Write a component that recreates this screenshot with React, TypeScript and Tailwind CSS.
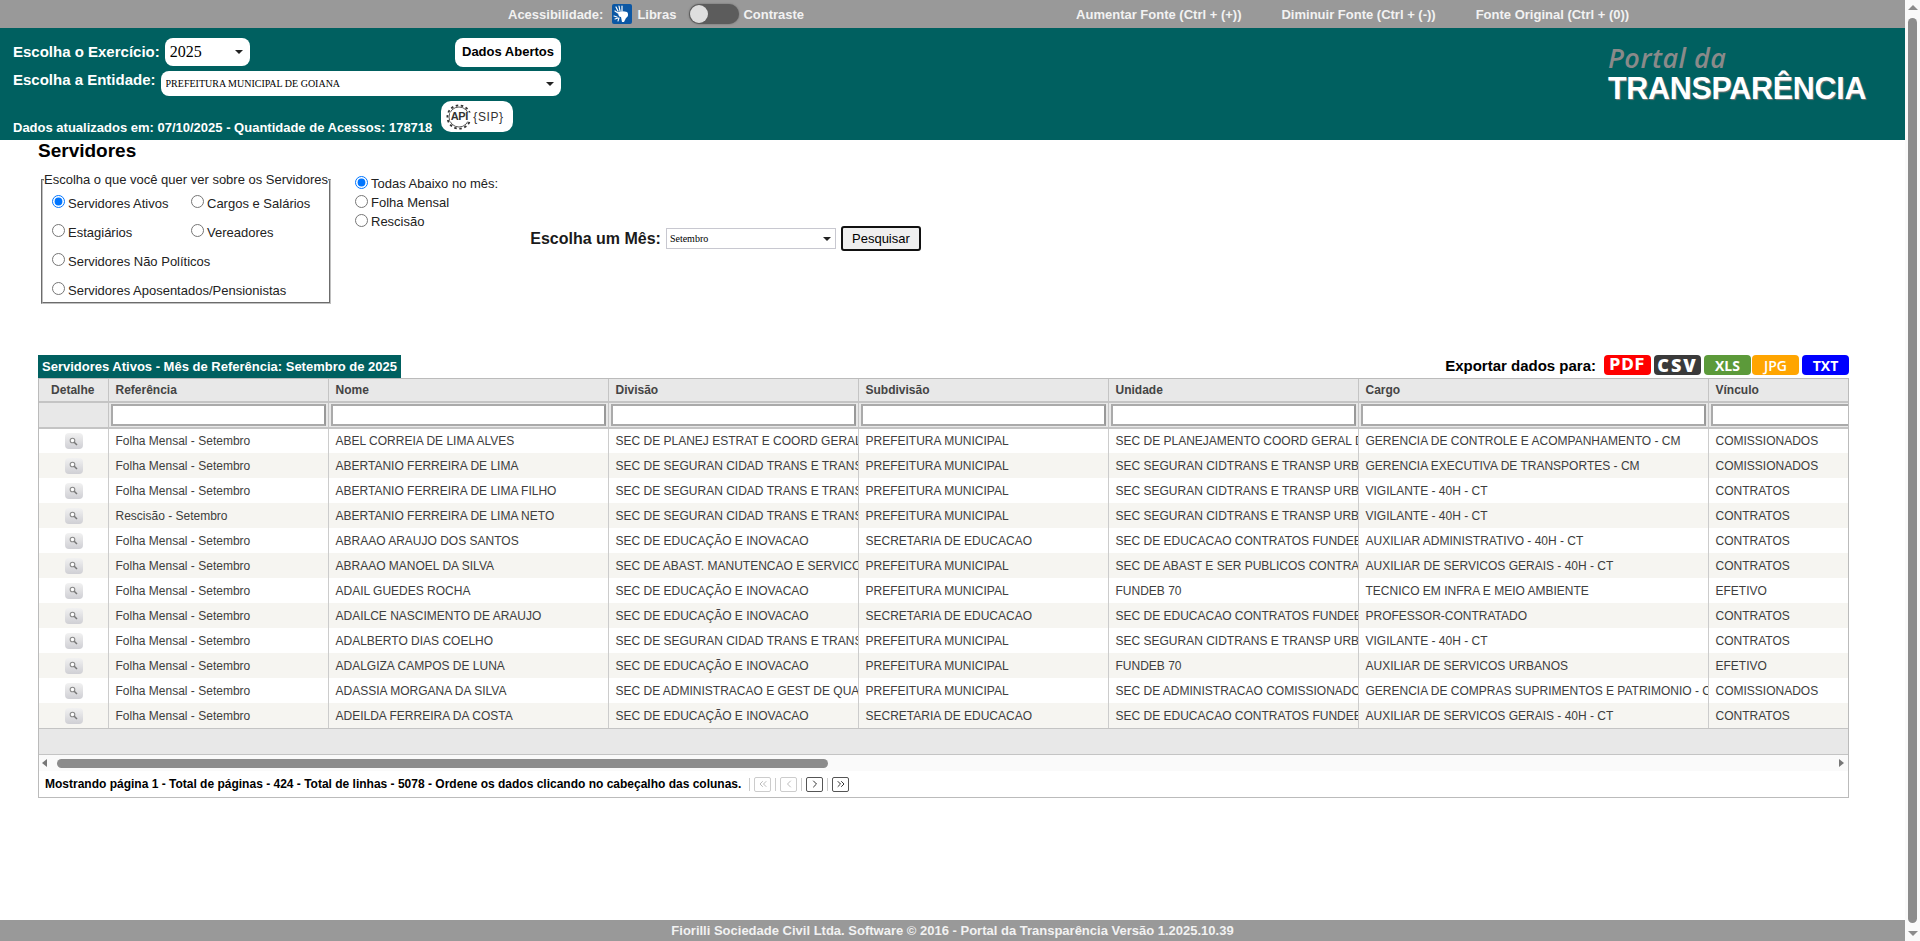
import { ChevronLeft, ChevronRight, ChevronsLeft, ChevronsRight } from "lucide-react";

const sans = "font-['Liberation_Sans',Arial,sans-serif]";

const rows = [
  ["Folha Mensal - Setembro", "ABEL CORREIA DE LIMA ALVES", "SEC DE PLANEJ ESTRAT E COORD GERAL DO", "PREFEITURA MUNICIPAL", "SEC DE PLANEJAMENTO COORD GERAL DO", "GERENCIA DE CONTROLE E ACOMPANHAMENTO - CM", "COMISSIONADOS"],
  ["Folha Mensal - Setembro", "ABERTANIO FERREIRA DE LIMA", "SEC DE SEGURAN CIDAD TRANS E TRANSP", "PREFEITURA MUNICIPAL", "SEC SEGURAN CIDTRANS E TRANSP URB", "GERENCIA EXECUTIVA DE TRANSPORTES - CM", "COMISSIONADOS"],
  ["Folha Mensal - Setembro", "ABERTANIO FERREIRA DE LIMA FILHO", "SEC DE SEGURAN CIDAD TRANS E TRANSP", "PREFEITURA MUNICIPAL", "SEC SEGURAN CIDTRANS E TRANSP URB", "VIGILANTE - 40H - CT", "CONTRATOS"],
  ["Rescisão - Setembro", "ABERTANIO FERREIRA DE LIMA NETO", "SEC DE SEGURAN CIDAD TRANS E TRANSP", "PREFEITURA MUNICIPAL", "SEC SEGURAN CIDTRANS E TRANSP URB", "VIGILANTE - 40H - CT", "CONTRATOS"],
  ["Folha Mensal - Setembro", "ABRAAO ARAUJO DOS SANTOS", "SEC DE EDUCAÇÃO E INOVACAO", "SECRETARIA DE EDUCACAO", "SEC DE EDUCACAO CONTRATOS FUNDEB", "AUXILIAR ADMINISTRATIVO - 40H - CT", "CONTRATOS"],
  ["Folha Mensal - Setembro", "ABRAAO MANOEL DA SILVA", "SEC DE ABAST. MANUTENCAO E SERVICOS", "PREFEITURA MUNICIPAL", "SEC DE ABAST E SER PUBLICOS CONTRA", "AUXILIAR DE SERVICOS GERAIS - 40H - CT", "CONTRATOS"],
  ["Folha Mensal - Setembro", "ADAIL GUEDES ROCHA", "SEC DE EDUCAÇÃO E INOVACAO", "PREFEITURA MUNICIPAL", "FUNDEB 70", "TECNICO EM INFRA E MEIO AMBIENTE", "EFETIVO"],
  ["Folha Mensal - Setembro", "ADAILCE NASCIMENTO DE ARAUJO", "SEC DE EDUCAÇÃO E INOVACAO", "SECRETARIA DE EDUCACAO", "SEC DE EDUCACAO CONTRATOS FUNDEB", "PROFESSOR-CONTRATADO", "CONTRATOS"],
  ["Folha Mensal - Setembro", "ADALBERTO DIAS COELHO", "SEC DE SEGURAN CIDAD TRANS E TRANSP", "PREFEITURA MUNICIPAL", "SEC SEGURAN CIDTRANS E TRANSP URB", "VIGILANTE - 40H - CT", "CONTRATOS"],
  ["Folha Mensal - Setembro", "ADALGIZA CAMPOS DE LUNA", "SEC DE EDUCAÇÃO E INOVACAO", "PREFEITURA MUNICIPAL", "FUNDEB 70", "AUXILIAR DE SERVICOS URBANOS", "EFETIVO"],
  ["Folha Mensal - Setembro", "ADASSIA MORGANA DA SILVA", "SEC DE ADMINISTRACAO E GEST DE QUAL", "PREFEITURA MUNICIPAL", "SEC DE ADMINISTRACAO COMISSIONADOS", "GERENCIA DE COMPRAS SUPRIMENTOS E PATRIMONIO - CM", "COMISSIONADOS"],
  ["Folha Mensal - Setembro", "ADEILDA FERREIRA DA COSTA", "SEC DE EDUCAÇÃO E INOVACAO", "SECRETARIA DE EDUCACAO", "SEC DE EDUCACAO CONTRATOS FUNDEB", "AUXILIAR DE SERVICOS GERAIS - 40H - CT", "CONTRATOS"],
];

const columns = ["Referência", "Nome", "Divisão", "Subdivisão", "Unidade", "Cargo", "Vínculo"];

const LibrasIcon = () => (
  <svg width="20" height="20" viewBox="0 0 20 20" className="rounded-[2px] bg-[#0b57a4]">
    <path d="M4 3l2 4M7 2l1 5M10 2v5M3 7l3 2" stroke="#fff" strokeWidth="1.2" strokeLinecap="round" />
    <path d="M6 8c3-1 6-1 9 0 2 2 1 5-1 6l-2 4h-2l-1-5c-2 0-3-2-3-5z" fill="#fff" />
    <path d="M2 12l3 1M3 15l3-1M6 17l1-3" stroke="#fff" strokeWidth="1.1" strokeLinecap="round" />
  </svg>
);

const ApiLogo = () => (
  <div className="mb-[2px] ml-[9px] flex h-[31px] w-[72px] items-center rounded-[10px] bg-white pl-[5px] text-[#333]">
    <div className="relative flex h-[26px] w-[26px] items-center justify-center">
      <svg width="26" height="26" viewBox="0 0 26 26" className="absolute inset-0">
        <circle cx="13" cy="13" r="10" fill="none" stroke="#333" strokeWidth="0.8" />
        <circle cx="13" cy="13" r="11.6" fill="none" stroke="#333" strokeWidth="1.8" strokeDasharray="2.5 2.6" />
        <rect x="4" y="8.5" width="22" height="9" fill="#fff" />
      </svg>
      <span className={`${sans} relative text-[11px] font-bold tracking-[-0.4px]`}>API</span>
    </div>
    <span className={`${sans} ml-[1px] text-[12px] tracking-[0.6px]`}>{"{SIP}"}</span>
  </div>
);

const Radio = ({ label, checked, name, className }: { label: string; checked?: boolean; name: string; className?: string }) => (
  <label className={`flex items-center ${className ?? ""}`}>
    <input type="radio" name={name} defaultChecked={checked} className="m-0 mr-[3px] h-[13px] w-[13px] -translate-y-[2px]" />
    <span>{label}</span>
  </label>
);

const ExportBtn = ({ label, className }: { label: string; className: string }) => (
  <button className={`flex h-[20px] w-[47px] items-center justify-center rounded-[4px] font-bold text-white ${className}`}>{label}</button>
);

const Caret = ({ className }: { className: string }) => (
  <div className={`pointer-events-none absolute h-0 w-0 border-x-[4px] border-t-[4px] border-x-transparent border-t-[#222] ${className}`} />
);

const DetailIcon = () => (
  <div className="mx-auto flex h-[16px] w-[18px] items-center justify-center rounded-[4px] bg-gradient-to-b from-[#f2f2f2] to-[#cfcfd4]">
    <svg width="9" height="9" viewBox="0 0 9 9">
      <circle cx="3.5" cy="3.5" r="2.3" fill="#fff" stroke="#888" strokeWidth="1.1" />
      <path d="M5.2 5.2L8 8" stroke="#777" strokeWidth="1.5" />
    </svg>
  </div>
);

const PagerBtn = ({ children, on }: { children: React.ReactNode; on?: boolean }) => (
  <div className={`flex h-[15px] w-[17px] items-center justify-center rounded-[2px] border ${on ? "border-[#555] text-[#333]" : "border-[#ccc] text-[#bbb]"}`}>
    {children}
  </div>
);

const PagerSep = () => <div className="mx-[4px] h-[13px] w-px bg-[#ccc]" />;

export default function App() {
  return (
    <div className={`${sans} flex h-screen w-full overflow-hidden bg-white`}>
      <div className="flex w-[1905px] flex-col">
        {/* Accessibility bar */}
        <div className="flex h-[28px] items-center bg-[#999999] pt-[1px] pl-[508px] text-[13px] font-bold text-[#f2f2f2]">
          <span>Acessibilidade:</span>
          <div className="-mt-[1px] ml-[9px]"><LibrasIcon /></div>
          <span className="ml-[5px]">Libras</span>
          <div className="-mt-[1px] ml-[13px] flex h-[20px] w-[50px] items-center rounded-full bg-[#5c5c5c] pl-[1px] shadow-[0_0_2px_#666]">
            <div className="h-[18px] w-[18px] rounded-full bg-[#dedede]" />
          </div>
          <span className="ml-[4px]">Contraste</span>
          <span className="ml-[272px]">Aumentar Fonte (Ctrl + (+))</span>
          <span className="ml-[40px]">Diminuir Fonte (Ctrl + (-))</span>
          <span className="ml-[40px]">Fonte Original (Ctrl + (0))</span>
        </div>

        {/* Header */}
        <div className="flex h-[112px] bg-[#006060] text-white">
          <div className="ml-[13px] flex w-[548px] flex-col">
            <div className="mt-[10px] flex h-[28px] items-center">
              <span className="pt-[1px] text-[15px] font-bold">Escolha o Exercício:</span>
              <div className="relative ml-[5px]">
                <select defaultValue="2025" className="block h-[28px] w-[85px] appearance-none rounded-[8px] bg-white pl-[5px] font-['Liberation_Serif',serif] text-[16px] text-black">
                  <option>2025</option>
                </select>
                <Caret className="top-[12px] right-[7px]" />
              </div>
              <button className="ml-auto h-[29px] w-[106px] rounded-[8px] bg-white text-[13px] font-bold text-black">Dados Abertos</button>
            </div>
            <div className="mt-[5px] flex h-[25px] items-start">
              <span className="shrink-0 text-[15px] leading-[18px] font-bold whitespace-nowrap">Escolha a Entidade:</span>
              <div className="relative ml-[5px]">
                <select defaultValue="p" className="block h-[25px] w-[400px] appearance-none rounded-[8px] bg-white pl-[5px] font-['Liberation_Serif',serif] text-[10px] text-black">
                  <option value="p">PREFEITURA MUNICIPAL DE GOIANA</option>
                </select>
                <Caret className="top-[11px] right-[7px]" />
              </div>
            </div>
            <div className="mt-[5px] flex h-[33px] items-end">
              <span className="-mb-[3px] text-[13px] font-bold">Dados atualizados em: 07/10/2025 - Quantidade de Acessos: 178718</span>
              <ApiLogo />
            </div>
          </div>
          <div className="ml-[1047px] flex flex-col">
            <span className="mt-[16px] font-['Open_Sans',sans-serif] text-[27px] leading-[28px] font-semibold tracking-[0.5px] text-[#8a8a8a] italic">Portal da</span>
            <span className="text-[30.5px] leading-[33px] font-bold tracking-[-0.3px] [text-shadow:1px_1px_1px_#777]">TRANSPARÊNCIA</span>
          </div>
        </div>

        {/* Filters */}
        <div className="pl-[38px] text-[13px] text-[#222]">
          <h1 className="text-[19px] leading-[22px] font-bold text-black">Servidores</h1>
          <div className="mt-[10px] flex h-[148px]">
            <fieldset className="ml-[3px] h-[132px] w-[290px] border-2 border-[#c0c0c0] pl-[9px] [border-style:groove]">
              <legend className="-ml-[8px] text-[13px] leading-[15px] whitespace-nowrap">Escolha o que você quer ver sobre os Servidores</legend>
              <div className="mt-[2px] grid grid-cols-[139px_1fr] grid-rows-[repeat(4,29px)] items-center">
                <Radio name="tipo" label="Servidores Ativos" checked />
                <Radio name="tipo" label="Cargos e Salários" />
                <Radio name="tipo" label="Estagiários" />
                <Radio name="tipo" label="Vereadores" />
                <Radio name="tipo" label="Servidores Não Políticos" className="col-span-2" />
                <Radio name="tipo" label="Servidores Aposentados/Pensionistas" className="col-span-2" />
              </div>
            </fieldset>
            <div className="ml-[24px] flex flex-col gap-[3px] pt-[4px]">
              <Radio name="folha" label="Todas Abaixo no mês:" checked className="h-[16px]" />
              <Radio name="folha" label="Folha Mensal" className="h-[16px]" />
              <Radio name="folha" label="Rescisão" className="h-[16px]" />
            </div>
            <div className="mt-[54px] ml-[32px] flex h-[25px] items-center">
              <span className="text-[16px] font-bold text-[#1a1a1a]">Escolha um Mês:</span>
              <div className="relative ml-[5px]">
                <select defaultValue="9" className="block h-[21px] w-[170px] appearance-none border border-[#c8c8d0] bg-white pl-[3px] font-['Liberation_Serif',serif] text-[10px] text-black">
                  <option value="9">Setembro</option>
                </select>
                <Caret className="top-[9px] right-[5px]" />
              </div>
              <button className="ml-[5px] h-[25px] w-[80px] rounded-[3px] border-2 border-[#111] bg-[#efefef] text-[13px] text-black">Pesquisar</button>
            </div>
          </div>
        </div>

        {/* Title + export */}
        <div className="mt-[35px] ml-[38px] flex h-[23px] w-[1811px] items-end">
          <div className="flex h-[23px] w-[363px] items-center bg-[#006060] pl-[4px] text-[13px] font-bold text-white">
            Servidores Ativos - Mês de Referência: Setembro de 2025
          </div>
          <div className="mb-[1px] ml-auto flex items-center gap-[3px] text-black">
            <span className="mt-[1px] mr-[5px] text-[15px] font-bold">Exportar dados para:</span>
            <ExportBtn label="PDF" className="bg-[#ff0000] font-['DejaVu_Sans',sans-serif] text-[15px] tracking-[1px]" />
            <ExportBtn label="CSV" className="bg-[#3a3a3a] font-['Open_Sans',sans-serif] text-[18px] font-extrabold tracking-[2px]" />
            <ExportBtn label="XLS" className="bg-[#5c9a3a] font-['Open_Sans',sans-serif] text-[14px]" />
            <ExportBtn label="JPG" className="-ml-[2px] bg-[#ffa500] font-['Open_Sans',sans-serif] text-[14px] font-semibold" />
            <ExportBtn label="TXT" className="bg-[#0000ff] font-['Open_Sans',sans-serif] text-[14px]" />
          </div>
        </div>

        {/* Grid */}
        <div className="ml-[38px] h-[420px] w-[1811px] overflow-hidden border border-[#bbbbbb] text-[12px] text-[#3d3d3d]">
          <table className="-ml-px w-[1920px] table-fixed border-collapse">
            <colgroup>
              <col className="w-[70px]" />
              <col className="w-[220px]" />
              <col className="w-[280px]" />
              <col className="w-[250px]" />
              <col className="w-[250px]" />
              <col className="w-[250px]" />
              <col className="w-[350px]" />
              <col className="w-[250px]" />
            </colgroup>
            <thead>
              <tr className="h-[23px] bg-[#e8e8e8] font-bold text-[#444]">
                <th className="border-r border-b-2 border-[#c4c4c4] text-center">Detalhe</th>
                {columns.map((c) => (
                  <th key={c} className="border-r border-b-2 border-[#c4c4c4] pl-[7px] text-left">{c}</th>
                ))}
              </tr>
              <tr className="h-[26px] border-b-2 border-[#c4c4c4] bg-[#e8e8e8]">
                <th className="border-r border-[#c4c4c4]" />
                {columns.map((c) => (
                  <th key={c} className="border-r border-[#c4c4c4] px-[2px]">
                    <input className="block h-[22px] w-full border-2 border-[#aaa] border-r-[#999] bg-white" />
                  </th>
                ))}
              </tr>
            </thead>
            <tbody>
              {rows.map((r, i) => (
                <tr key={i} className={`h-[25px] ${i % 2 ? "bg-[#f6f5f1]" : "bg-white"}`}>
                  <td className="border-r border-[#cccccc] pl-[2px]"><DetailIcon /></td>
                  {r.map((v, j) => (
                    <td key={j} className="overflow-hidden border-r border-[#cccccc] pl-[7px] whitespace-nowrap">{v}</td>
                  ))}
                </tr>
              ))}
            </tbody>
          </table>
          <div className="h-[27px] border-y border-[#c4c4c4] bg-[#e8e8e8]" />
          {/* horizontal scrollbar */}
          <div className="flex h-[16px] items-center bg-[#fafafa] px-[3px]">
            <div className="h-0 w-0 border-y-[4px] border-r-[5px] border-y-transparent border-r-[#777]" />
            <div className="ml-[10px] h-[9px] w-[771px] rounded-full bg-[#8c8c8c]" />
            <div className="mr-[1px] ml-auto h-0 w-0 border-y-[4px] border-l-[5px] border-y-transparent border-l-[#777]" />
          </div>
          {/* pager */}
          <div className="flex h-[26px] items-center pl-[6px] text-[12px] font-bold text-black">
            <span>Mostrando página 1 - Total de páginas - 424 - Total de linhas - 5078 - Ordene os dados clicando no cabeçalho das colunas.</span>
            <div className="ml-[8px] flex items-center">
              <div className="mr-[4px] h-[13px] w-px bg-[#ccc]" />
              <PagerBtn><ChevronsLeft size={12} /></PagerBtn>
              <PagerSep />
              <PagerBtn><ChevronLeft size={12} /></PagerBtn>
              <PagerSep />
              <PagerBtn on><ChevronRight size={12} /></PagerBtn>
              <PagerSep />
              <PagerBtn on><ChevronsRight size={12} /></PagerBtn>
            </div>
          </div>
        </div>

        <div className="flex-1" />

        <div className="flex h-[21px] items-center justify-center bg-[#999999] pt-[1px] text-[13px] font-bold text-[#f2f2f2]">
          Fiorilli Sociedade Civil Ltda. Software © 2016 - Portal da Transparência Versão 1.2025.10.39
        </div>
      </div>

      {/* page scrollbar */}
      <div className="flex w-[15px] flex-col items-center bg-[#fafafa] pt-[5px] pb-[5px]">
        <div className="h-0 w-0 border-x-[5px] border-b-[5px] border-x-transparent border-b-[#8c8c8c]" />
        <div className="mt-[8px] w-[9px] flex-1 rounded-full bg-[#8c8c8c]" />
        <div className="mt-[8px] h-0 w-0 border-x-[5px] border-t-[5px] border-x-transparent border-t-[#8c8c8c]" />
      </div>
    </div>
  );
}
